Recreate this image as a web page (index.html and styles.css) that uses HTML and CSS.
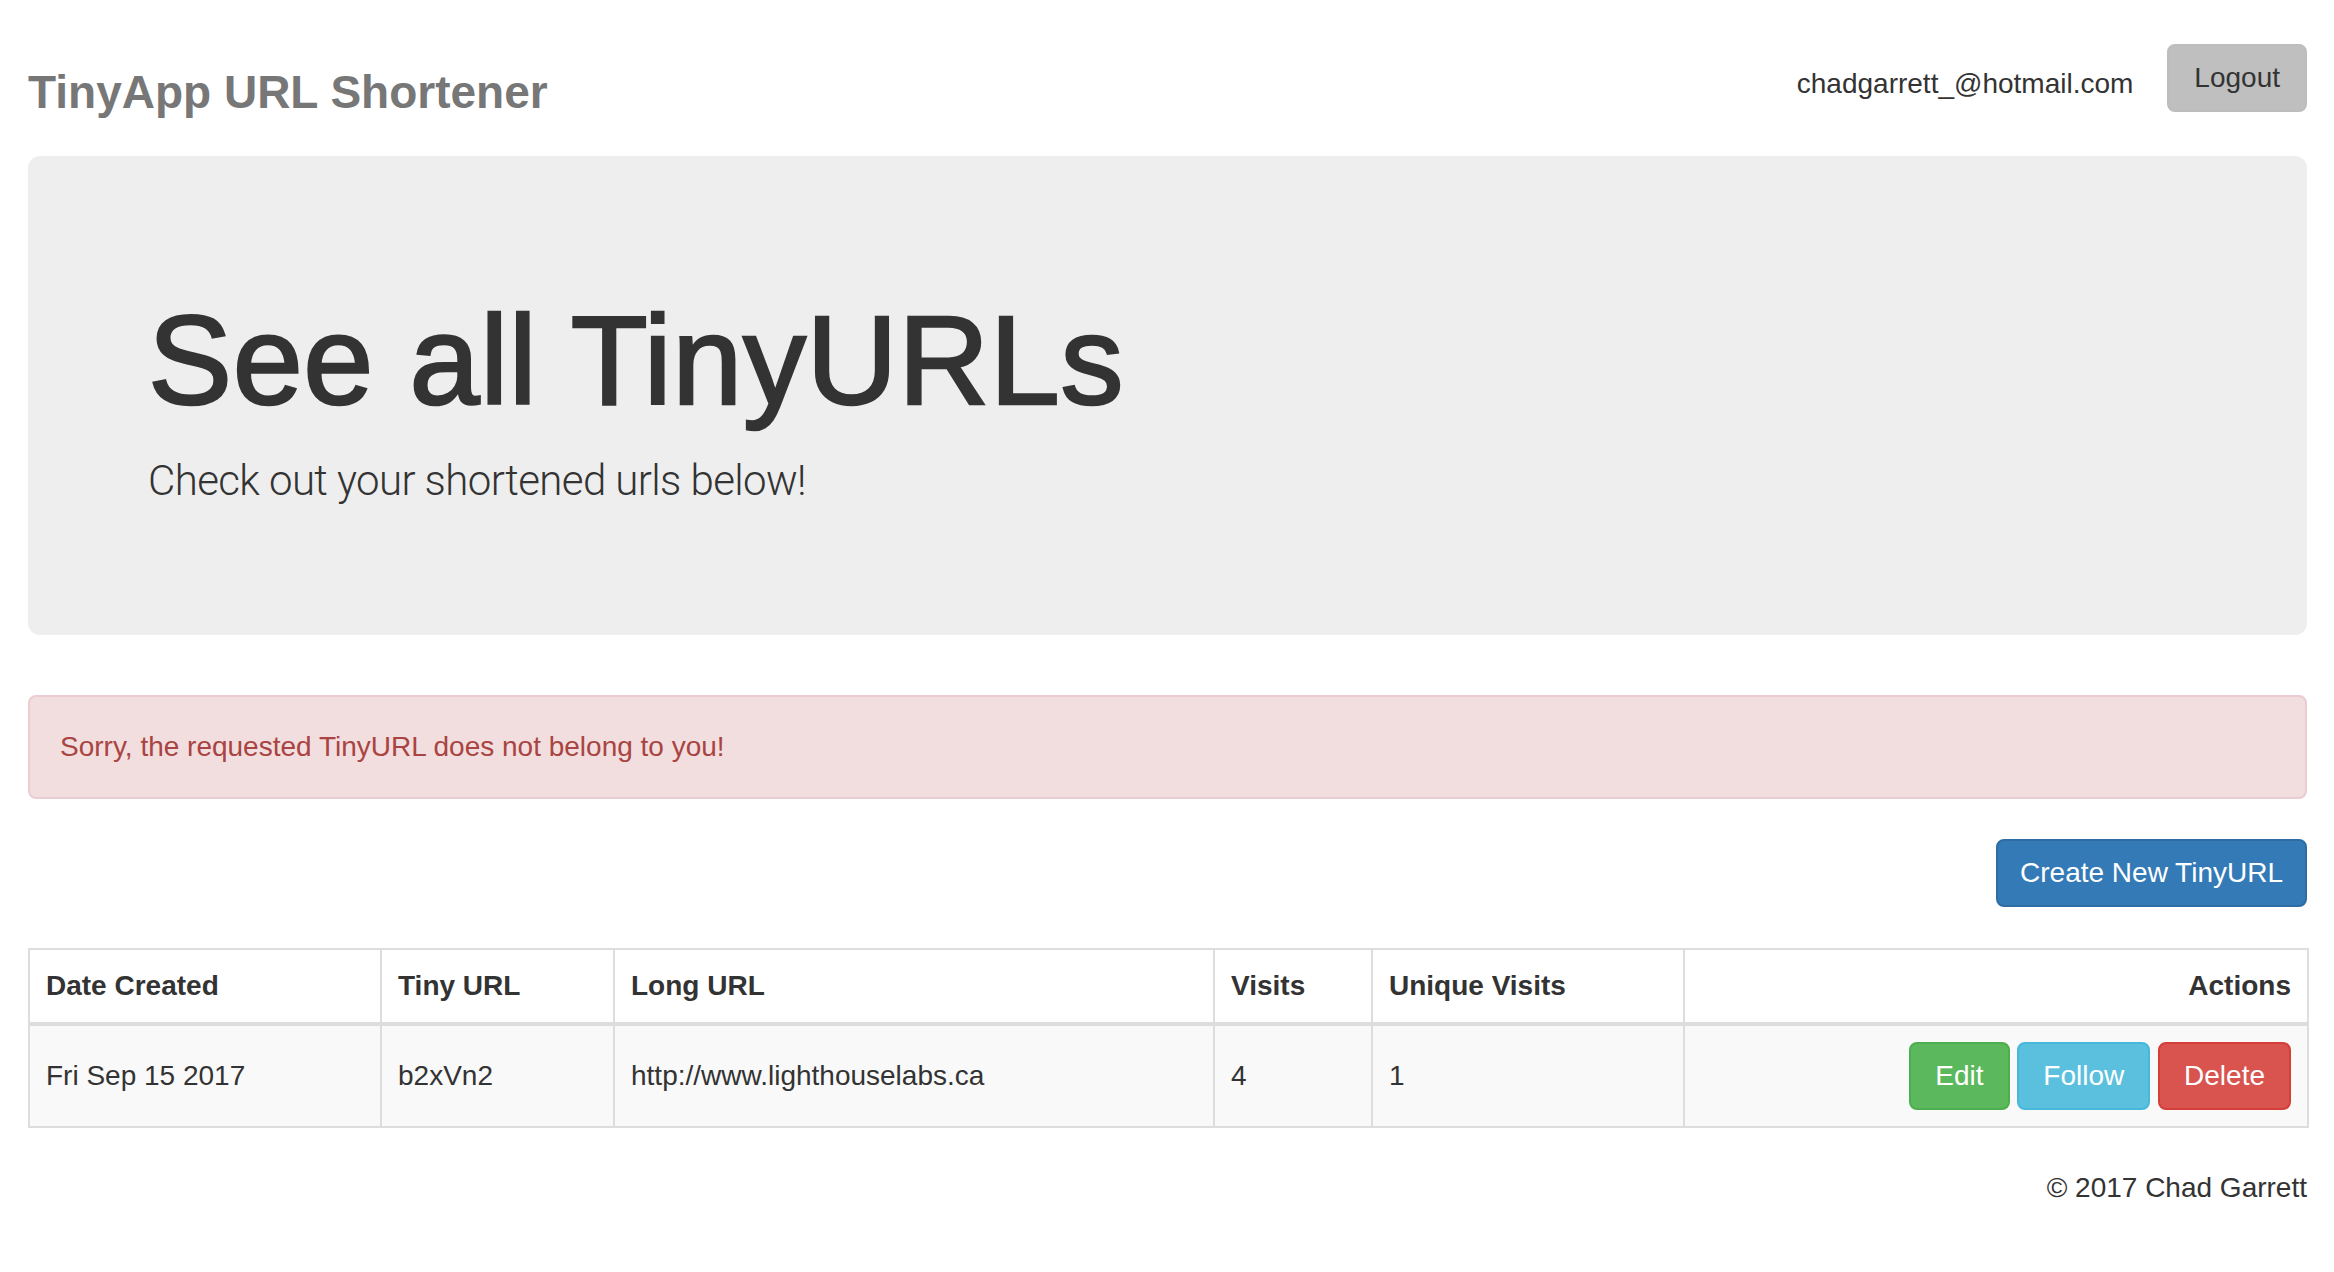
FILE: index.html
```html
<!DOCTYPE html>
<html lang="en">
<head>
<meta charset="utf-8">
<title>TinyApp URL Shortener</title>
<link rel="stylesheet" href="styles.css">
</head>
<body>
<div class="page">
  <header class="topbar">
    <div class="brand">TinyApp URL Shortener</div>
    <div class="user">
      <span class="email">chadgarrett_@hotmail.com</span>
      <button class="btn btn-logout">Logout</button>
    </div>
  </header>

  <section class="jumbotron">
    <h1>See all TinyURLs</h1>
    <p>Check out your shortened urls below!</p>
  </section>

  <div class="alert">Sorry, the requested TinyURL does not belong to you!</div>

  <div class="create-row">
    <a class="btn btn-primary">Create New TinyURL</a>
  </div>

  <table class="urls">
    <colgroup>
      <col class="c-date">
      <col class="c-tiny">
      <col class="c-long">
      <col class="c-visits">
      <col class="c-unique">
      <col class="c-actions">
    </colgroup>
    <thead>
      <tr>
        <th>Date Created</th>
        <th>Tiny URL</th>
        <th>Long URL</th>
        <th>Visits</th>
        <th>Unique Visits</th>
        <th class="right">Actions</th>
      </tr>
    </thead>
    <tbody>
      <tr>
        <td>Fri Sep 15 2017</td>
        <td>b2xVn2</td>
        <td>http://www.lighthouselabs.ca</td>
        <td>4</td>
        <td>1</td>
        <td class="right"><a class="btn btn-success">Edit</a> <a class="btn btn-info">Follow</a> <a class="btn btn-danger">Delete</a></td>
      </tr>
    </tbody>
  </table>

  <footer class="footer">© 2017 Chad Garrett</footer>
</div>
</body>
</html>
```

FILE: styles.css
```css
html, body {
  margin: 0;
  padding: 0;
  background: #fff;
}

body {
  font-family: "Liberation Sans", Arial, sans-serif;
  font-size: 28px;
  line-height: 40px;
  color: #333;
}

.page {
  padding: 0 27px 0 28px;
}

/* top bar */
.topbar {
  display: flex;
  justify-content: space-between;
  align-items: flex-start;
  height: 156px;
}

.brand {
  margin-top: 67px;
  font-size: 46px;
  line-height: 50px;
  font-weight: 700;
  color: #777;
}

.user {
  display: flex;
  align-items: flex-start;
}

.email {
  margin-top: 64px;
  margin-right: 34px;
  color: #333;
}

.btn {
  display: inline-block;
  box-sizing: border-box;
  height: 68px;
  padding: 12px 24px;
  border: 2px solid transparent;
  border-radius: 8px;
  font-family: inherit;
  font-size: 28px;
  line-height: 40px;
  text-align: center;
  vertical-align: middle;
  white-space: nowrap;
  cursor: pointer;
}

.btn-logout {
  margin-top: 44px;
  background: #bfbfbf;
  border-color: #bdbdbd;
  color: #333;
  padding: 12px 25px;
}

/* jumbotron */
.jumbotron {
  background: #eee;
  border-radius: 12px;
  padding: 96px 120px;
  margin-bottom: 60px;
}

.jumbotron h1 {
  margin: 40px 0 20px;
  font-size: 126px;
  line-height: 1.1;
  font-weight: 400;
  letter-spacing: 0.6px;
  color: #333;
  -webkit-text-stroke: 2.5px #333;
}

.jumbotron p {
  margin: 0 0 28px;
  font-family: Roboto, "Liberation Sans", sans-serif;
  font-weight: 300;
  font-size: 42px;
  line-height: 60px;
  letter-spacing: -0.6px;
  color: #333;
}

/* alert */
.alert {
  padding: 30px;
  border: 2px solid #ebccd1;
  border-radius: 8px;
  background: #f2dede;
  color: #a94442;
  margin-bottom: 40px;
}

/* create button */
.create-row {
  display: flex;
  justify-content: flex-end;
  margin-bottom: 41px;
}

.btn-primary {
  background: #337ab7;
  border-color: #2e6da4;
  color: #fff;
  padding: 12px 22px;
}

/* table */
.urls {
  width: 100%;
  border-collapse: collapse;
  table-layout: fixed;
  margin-bottom: 40px;
  border: 2px solid #ddd;
}

.c-date { width: 352px; }
.c-tiny { width: 233px; }
.c-long { width: 600px; }
.c-visits { width: 158px; }
.c-unique { width: 312px; }
.c-actions { width: 624px; }

.urls th,
.urls td {
  border: 2px solid #ddd;
  padding: 16px;
  text-align: left;
  vertical-align: middle;
  line-height: 40px;
}

.urls th {
  font-weight: 700;
  background: #fff;
  border-bottom-width: 4px;
}

.urls tbody tr {
  background: #f9f9f9;
}

.urls .right {
  text-align: right;
}

.btn-success {
  background: #5cb85c;
  border-color: #4cae4c;
  color: #fff;
}

.btn-info {
  background: #5bc0de;
  border-color: #46b8da;
  color: #fff;
}

.btn-danger {
  background: #d9534f;
  border-color: #d43f3a;
  color: #fff;
}

/* footer */
.footer {
  text-align: right;
  color: #333;
}
```
